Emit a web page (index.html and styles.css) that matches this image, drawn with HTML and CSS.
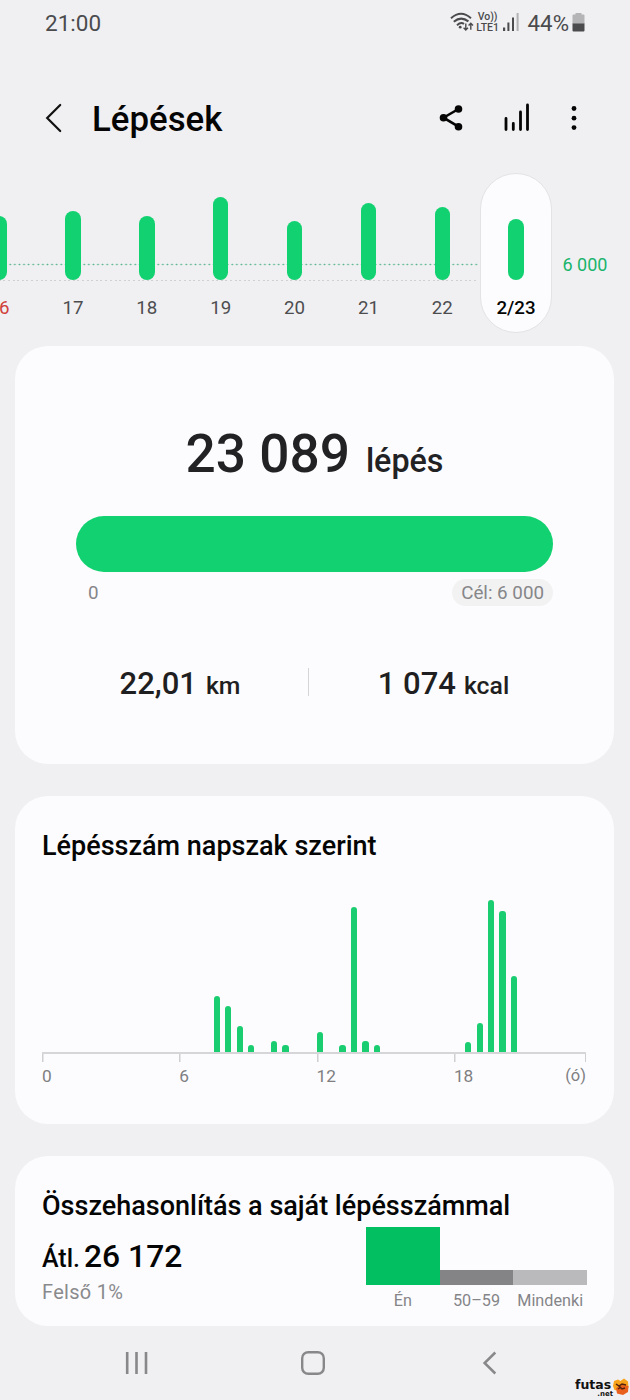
FILE: index.html
```
<!DOCTYPE html>
<html lang="hu">
<head>
<meta charset="utf-8">
<title>Lépések</title>
<link rel="stylesheet" href="styles.css">
</head>
<body>
<div class="screen">
  <header class="status">
    <span class="clock">21:00</span>
    <div class="status-right">
      <svg class="wifi" width="24" height="20" viewBox="0 0 24 20" fill="none" stroke="#4b4b4e" stroke-width="2">
        <path d="M1 6.2Q11 -2.6 21 6.2"/><path d="M3.8 9.8Q11 3.6 18.4 9.4"/><path d="M7 13.2Q11 9.6 14 12"/>
        <circle cx="10.2" cy="15.2" r="1.4" fill="#4b4b4e" stroke="none"/>
        <path stroke-width="1.4" d="M15.8 11.5v6.4M13.6 15.8l2.2 2.2 2.2-2.2M20.8 17.8v-6.4M18.6 13.4l2.2-2.2 2.2 2.2"/>
      </svg>
      <div class="volte"><span>Vo))</span><span>LTE1</span></div>
      <svg class="signal" width="18" height="20" viewBox="0 0 18 20">
        <g fill="#4b4b4e"><rect x="1" y="15.500" width="2.200" height="3.500"/><rect x="5.400" y="10.500" width="2" height="8.500"/><rect x="10" y="5.500" width="2" height="13.500"/></g>
        <rect x="14.600" y="1" width="2" height="18" fill="#b2b2b4"/>
      </svg>
      <span class="percent">44%</span>
      <svg class="battery" width="13" height="20" viewBox="0 0 13 20">
        <path fill="#b4b4b6" d="M3.500 1h6v1.500h2q1 0 1 1V12H.5V3.500q0-1 1-1h2z"/><path fill="#4b4b4e" d="M.5 11.500h12V18.500q0 1-1 1h-10q-1 0-1-1z"/>
      </svg>
    </div>
  </header>

  <div class="toolbar">
    <svg class="back" width="18" height="30" viewBox="0 0 18 30" fill="none" stroke="#111" stroke-width="2.200" stroke-linecap="round"><path d="M15.200 2L2.200 15l13 13"/></svg>
    <h1>Lépések</h1>
    <svg class="share" width="26" height="28" viewBox="0 0 26 28" fill="#050505"><path d="M20.500 5L5.500 13.700l15 9" fill="none" stroke="#050505" stroke-width="2.600"/><circle cx="20.500" cy="5" r="3.800"/><circle cx="5.500" cy="13.700" r="3.800"/><circle cx="20.500" cy="22.700" r="3.800"/></svg>
    <svg class="bars" width="28" height="30" viewBox="0 0 28 30" stroke="#050505" stroke-width="2.800" stroke-linecap="round"><path d="M3 15.500v11M10.300 20.500v6M17.500 9v17.500M24.500 2v24.500"/></svg>
    <svg class="more" width="8" height="28" viewBox="0 0 8 28" fill="#050505"><circle cx="4" cy="4.500" r="2.400"/><circle cx="4" cy="14.200" r="2.400"/><circle cx="4" cy="23.600" r="2.400"/></svg>
  </div>

  <section class="week">
    <div class="days">
      <div class="day sunday"><i style="height:64px"></i><span>6</span></div>
      <div class="day"><i style="height:69.5px"></i><span>17</span></div>
      <div class="day"><i style="height:64px"></i><span>18</span></div>
      <div class="day"><i style="height:83.5px"></i><span>19</span></div>
      <div class="day"><i style="height:59px"></i><span>20</span></div>
      <div class="day"><i style="height:77px"></i><span>21</span></div>
      <div class="day"><i style="height:73px"></i><span>22</span></div>
      <div class="day today"><i style="height:61.500px"></i><span>2/23</span></div>
    </div>
    <span class="goal-label">6 000</span>
  </section>

  <section class="card summary">
    <div class="total"><b>23 089</b><span>lépés</span></div>
    <div class="progress"></div>
    <div class="range"><span class="zero">0</span><span class="target">Cél: 6 000</span></div>
    <div class="stats">
      <div class="stat km"><b>22,01</b><span>km</span></div>
      <div class="stat kcal"><b>1 074</b><span>kcal</span></div>
    </div>
  </section>

  <section class="card hourly">
    <h2>Lépésszám napszak szerint</h2>
    <div class="plot">
      <i style="grid-column:16;height:56px"></i><i style="grid-column:17;height:46px"></i><i style="grid-column:18;height:26px"></i><i style="grid-column:19;height:7.500px"></i>
      <i style="grid-column:21;height:11.500px"></i><i style="grid-column:22;height:7.500px"></i><i style="grid-column:25;height:20.500px"></i>
      <i style="grid-column:27;height:7.500px"></i><i style="grid-column:28;height:145px"></i><i style="grid-column:29;height:11.500px"></i><i style="grid-column:30;height:7.500px"></i>
      <i style="grid-column:38;height:10px"></i><i style="grid-column:39;height:29px"></i><i style="grid-column:40;height:152.500px"></i><i style="grid-column:41;height:141px"></i><i style="grid-column:42;height:76px"></i>
    </div>
    <div class="axis"><span>0</span><span>6</span><span>12</span><span>18</span><span class="unit">(ó)</span></div>
  </section>

  <section class="card compare">
    <h2>Összehasonlítás a saját lépésszámmal</h2>
    <div class="compare-row">
      <div class="average">
        <div class="avg"><span>Átl.</span><b>26 172</b></div>
        <div class="rank">Felső 1%</div>
      </div>
      <div class="groups">
        <div class="group me"><i></i><span>Én</span></div>
        <div class="group age"><i></i><span>50–59</span></div>
        <div class="group all"><i></i><span>Mindenki</span></div>
      </div>
    </div>
  </section>

  <nav class="nav">
    <svg width="26" height="26" viewBox="0 0 26 26" stroke="#88888a" stroke-width="2.600"><path d="M4.200 2v22M13.500 2v22M23 2v22"/></svg>
    <svg width="26" height="26" viewBox="0 0 26 26" fill="none" stroke="#88888a" stroke-width="2.400"><rect x="2.200" y="2.200" width="21.600" height="21.600" rx="6"/></svg>
    <svg width="26" height="26" viewBox="0 0 26 26" fill="none" stroke="#88888a" stroke-width="2.500"><path d="M19.300 2.500L8.600 13l10.700 10.500"/></svg>
  </nav>

  <div class="watermark">
    <div class="site"><span>futas</span><small>.net</small></div>
    <svg width="16" height="18" viewBox="0 0 16 18"><path fill="#f6a21a" d="M1 3l4-1.500 2.500 1.500L11 .5l4 3 .5 6L8 13 1.500 12 0 8z"/><path fill="#e8601c" d="M3 10l6-3 6.500 1-.5 6-5 3-6-1.500z"/><path stroke="#53210c" stroke-width="1.500" fill="none" d="M3 6l3 2 3-2 4 1M6 8l3 3 3-1M5 11l3-2"/></svg>
  </div>
</div>
</body>
</html>
```

FILE: styles.css
```
* { box-sizing: border-box; }
body { margin: 0; background: #f0f0f2; font-family: Roboto, "Liberation Sans", sans-serif; color: #1f1f22; }
h1, h2 { margin: 0; font-weight: 500; color: #050505; white-space: nowrap; }
b { font-weight: 500; }
svg { display: block; flex: none; }
span { white-space: nowrap; }

.screen { position: relative; width: 630px; height: 1400px; overflow: hidden; display: flex; flex-direction: column; }

.status { height: 46px; padding: 0 45px; display: flex; justify-content: space-between; align-items: center; color: #4b4b4e; }
.clock { font-size: 22.500px; line-height: 46px; }
.status-right { display: flex; align-items: center; }
.status-right svg { margin-bottom: 2px; }
.volte { width: 24px; margin-left: 2px; display: flex; flex-direction: column; align-items: center; font-size: 10.500px; line-height: 11px; font-weight: 500; padding-bottom: 2px; }
.signal { margin-left: 2px; }
.percent { margin-left: 8px; font-size: 22.300px; line-height: 46px; }
.battery { margin-left: 3px; }

.toolbar { height: 127px; padding: 16px 52px 0 45px; display: flex; align-items: center; }
.toolbar h1 { margin-left: 29px; padding-top: 3px; font-size: 34.800px; line-height: 40px; flex: 1; }
.bars { margin-left: 39px; }
.more { margin-left: 39px; }

.week { height: 173px; display: flex; }
.days { margin-left: -37.800px; display: flex; flex: none; }
.day { width: 73.860px; height: 160px; display: flex; flex-direction: column; align-items: center; justify-content: flex-end; padding-bottom: 14px; font-size: 18.700px; line-height: 22px; color: #4d4d50;
  background: radial-gradient(circle, #55b58b 0.700px, transparent 1.100px) 0 90px / 4.600px 3px repeat-x, repeating-linear-gradient(90deg, #d0d0d2 0 2px, transparent 2px 4.600px) 0 107px / 100% 1px no-repeat; }
.day i { width: 15.500px; border-radius: 8px; background: #12d170; margin-bottom: 17px; }
.sunday { color: #d0403c; }
.sunday span { padding-left: 10px; }
.today { width: 72px; margin-left: 0.800px; border-radius: 36px; border: 1px solid #e3e3e6; background: #fcfcfe; color: #050505; font-weight: 500; padding-bottom: 13px; }
.goal-label { margin: 80px 0 0 10.500px; font-size: 18px; line-height: 24px; color: #19b46c; }

.card { width: 599px; margin-left: 15px; border-radius: 33px; background: #fcfcfe; flex: none; }
.summary { height: 418px; padding: 76px 61px 0; }
.total { display: flex; justify-content: center; align-items: baseline; gap: 16px; height: 94px; line-height: 65px; color: #222225; }
.total b { font-size: 53.200px; }
.total span { font-size: 32.300px; font-weight: 500; }
.progress { height: 56px; border-radius: 28px; background: #12d170; }
.range { margin-top: 7px; display: flex; justify-content: space-between; font-size: 18.800px; line-height: 27px; color: #868689; }
.zero { margin-left: 12px; padding-top: 1px; }
.target { height: 27px; padding: 1px 9px 0; border-radius: 14px; background: #f2f2f3; }
.stats { margin-top: 61px; height: 28px; display: flex; }
.stat { display: flex; justify-content: center; align-items: baseline; gap: 9px; line-height: 32px; }
.stat b { font-size: 31px; }
.stat span { font-size: 24.800px; font-weight: 500; }
.km { width: 233px; padding-right: 24px; border-right: 1px solid #d5d5d8; }
.kcal { width: 244px; padding-left: 25px; gap: 8px; }

.hourly { height: 328px; margin-top: 32px; padding: 33px 28px 0 27px; }
.hourly h2, .compare h2 { font-size: 27px; line-height: 34px; }
.plot { height: 191px; padding-left: 0.500px; display: grid; grid-template-columns: repeat(48, 11.430px); align-items: end; border-bottom: 2px solid #d6d6d8; }
.plot i { grid-row: 1; width: 6.200px; border-radius: 3px 3px 0 0; background: #1acd70; }
.axis { display: grid; grid-template-columns: 137.300px 137.300px 137.300px 1fr auto; height: 34px; padding-top: 12px; font-size: 17.300px; line-height: 20px; color: #7f7f82;
  background: linear-gradient(#cfcfd2, #cfcfd2) 0 0 / 1.500px 8px no-repeat, linear-gradient(#cfcfd2, #cfcfd2) 137px 0 / 1.500px 8px no-repeat, linear-gradient(#cfcfd2, #cfcfd2) 274.500px 0 / 1.500px 8px no-repeat, linear-gradient(#cfcfd2, #cfcfd2) 411.500px 0 / 1.500px 8px no-repeat, linear-gradient(#cfcfd2, #cfcfd2) 100% 0 / 1.500px 8px no-repeat; }
.unit { font-size: 16.500px; line-height: 20px; }

.compare { height: 170px; margin-top: 32px; padding: 33px 27px 0; }
.compare-row { display: flex; justify-content: space-between; margin-top: 4px; }
.avg { margin-top: 12px; display: flex; align-items: baseline; gap: 4px; line-height: 34px; color: #050505; }
.avg span { font-size: 25px; font-weight: 500; }
.avg b { font-size: 31.800px; }
.rank { font-size: 20px; line-height: 24px; margin-top: 4px; letter-spacing: 0.300px; color: #8a8a8d; }
.groups { display: flex; width: 221px; }
.group { flex: 1; display: flex; flex-direction: column; align-items: center; justify-content: flex-end; font-size: 16.200px; line-height: 20px; color: #858588; height: 84px; }
.group i { width: 100%; height: 15px; margin-bottom: 6px; background: #848486; }
.me i { height: 58px; background: #02c062; }
.all i { background: #bababc; }

.nav { height: 74px; padding: 0 128px 0 123px; display: flex; align-items: center; justify-content: space-between; }
.watermark { position: absolute; left: 575px; top: 1378px; display: flex; color: #111; }
.site { width: 38px; display: flex; flex-direction: column; font: 700 12.500px/15px "DejaVu Sans", sans-serif; }
.site span { height: 12px; line-height: 13px; }
.site small { align-self: flex-end; font-size: 7px; line-height: 8px; }
```
